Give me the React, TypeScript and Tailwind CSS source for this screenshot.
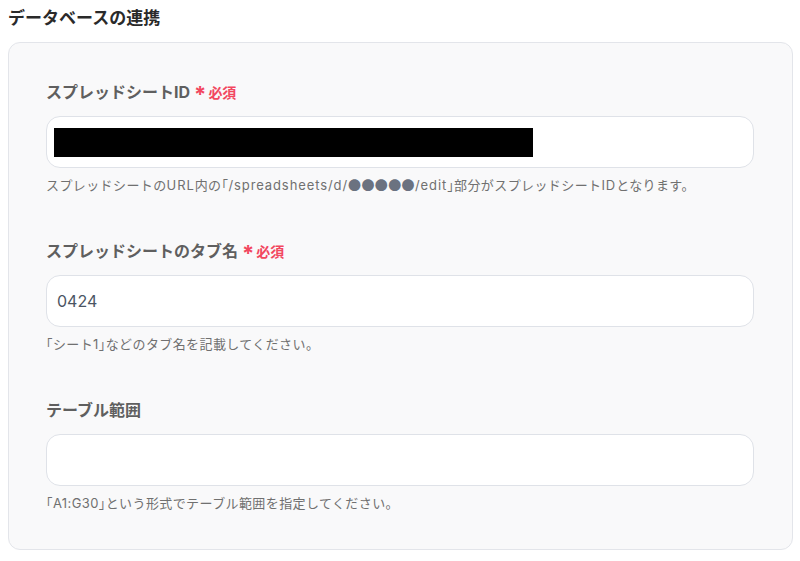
import React from 'react';

const font = { fontFamily: 'Inter, "Noto Sans CJK JP", sans-serif' };

interface FieldProps {
  label: string;
  required?: boolean;
  value?: React.ReactNode;
  help: React.ReactNode;
}

// narrow 「」 like the original (half-width alternates)
function B({ children }: { children: React.ReactNode }) {
  return <span className="[font-feature-settings:'halt']">{children}</span>;
}

function L({ children }: { children: React.ReactNode }) {
  return <span className="tracking-[0.9px]">{children}</span>;
}

function Field({ label, required, value, help }: FieldProps) {
  return (
    <div className="flex flex-col">
      <div className="flex items-center h-6 text-[16px] font-bold text-[#5f5f5f]">
        <span>{label}</span>
        {required && (
          <span className="ml-1 flex items-center text-[#f2475f] text-[14px] font-bold">
            <span className="text-[22px] leading-none mt-[4px] mr-[2px]">*</span>必須
          </span>
        )}
      </div>
      <div className="mt-3 h-[52px] w-full rounded-[14px] border border-[#dfe2e8] bg-white flex items-center px-[10px] text-[16px] text-[#4b5563]">
        {value}
      </div>
      <p className="mt-2 text-[13px] leading-[18px] tracking-[0.4px] text-[#707070] whitespace-nowrap">{help}</p>
    </div>
  );
}

export default function App() {
  return (
    <div className="w-[800px] h-[561px] bg-white px-2 pt-[6px]" style={font}>
      <h2 className="text-[17px] leading-6 font-bold text-[#2a2a2a]">データベースの連携</h2>
      <div className="mt-3 w-[785px] rounded-[12px] border border-[#e3e5ea] bg-[#f9f9fa] pl-[37px] pr-[38px] pt-[37px] pb-[37px] flex flex-col gap-[45px]">
        <Field
          label="スプレッドシートID"
          required
          value={<div className="ml-[-3px] h-[29px] w-[479px] bg-black" />}
          help={
            <>
              スプレッドシートの<L>URL</L>内の<B>「</B><L>/spreadsheets/d/</L>
              <span className="text-[#6b7280]" style={{ fontFamily: '"Noto Sans CJK JP", sans-serif' }}>
                ●●●●●
              </span>
              <L>/edit</L><B>」</B>部分がスプレッドシート<L>ID</L>となります。
            </>
          }
        />
        <Field
          label="スプレッドシートのタブ名"
          required
          value={<span>0424</span>}
          help={<><B>「</B>シート1<B>」</B>などのタブ名を記載してください。</>}
        />
        <Field
          label="テーブル範囲"
          help={<><B>「</B>A1:G30<B>」</B>という形式でテーブル範囲を指定してください。</>}
        />
      </div>
    </div>
  );
}
